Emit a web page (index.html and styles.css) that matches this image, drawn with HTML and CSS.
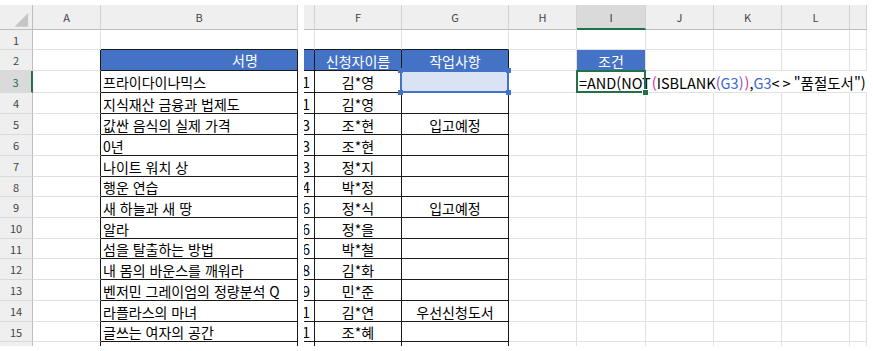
FILE: index.html
```html
<!DOCTYPE html>
<html lang="ko">
<head>
<meta charset="utf-8">
<title>Sheet</title>
<link rel="stylesheet" href="styles.css">
</head>
<body>
<div class="pane left">
  <div class="c h corner"><svg width="33" height="24" viewBox="0 0 33 24"><polygon points="29,8 29,22 15,22" fill="#c6c6c6"/></svg></div>
  <div class="c h">A</div>
  <div class="c h"><span class="bw">B</span></div>

  <div class="c rh">1</div><div class="c"></div><div class="c tt"></div>
  <div class="c rh">2</div><div class="c tl"></div><div class="c t th"><span class="bw">서명</span></div>
  <div class="c rh rsel">3</div><div class="c tl"></div><div class="c t">프라이다이나믹스</div>
  <div class="c rh">4</div><div class="c tl"></div><div class="c t">지식재산 금융과 법제도</div>
  <div class="c rh">5</div><div class="c tl"></div><div class="c t">값싼 음식의 실제 가격</div>
  <div class="c rh">6</div><div class="c tl"></div><div class="c t">0년</div>
  <div class="c rh">7</div><div class="c tl"></div><div class="c t">나이트 워치 상</div>
  <div class="c rh">8</div><div class="c tl"></div><div class="c t">행운 연습</div>
  <div class="c rh">9</div><div class="c tl"></div><div class="c t">새 하늘과 새 땅</div>
  <div class="c rh">10</div><div class="c tl"></div><div class="c t">알라</div>
  <div class="c rh">11</div><div class="c tl"></div><div class="c t">섬을 탈출하는 방법</div>
  <div class="c rh">12</div><div class="c tl"></div><div class="c t">내 몸의 바운스를 깨워라</div>
  <div class="c rh">13</div><div class="c tl"></div><div class="c t">벤저민 그레이엄의 정량분석 Q</div>
  <div class="c rh">14</div><div class="c tl"></div><div class="c t">라플라스의 마녀</div>
  <div class="c rh">15</div><div class="c tl"></div><div class="c t">글쓰는 여자의 공간</div>
  <div class="c rh">16</div><div class="c tl"></div><div class="c t">패권 도전자의 전략</div>
</div>

<div class="pane right">
  <div class="c h"></div><div class="c h">F</div><div class="c h">G</div><div class="c h">H</div><div class="c h hsel">I</div><div class="c h">J</div><div class="c h">K</div><div class="c h">L</div><div class="c h"></div>

  <div class="c tt"></div><div class="c tt"></div><div class="c tt"></div><div class="c"></div><div class="c"></div><div class="c"></div><div class="c"></div><div class="c"></div><div class="c"></div>

  <div class="c t th"></div><div class="c t th">신청자이름</div><div class="c t th">작업사항</div><div class="c"></div><div class="c cond">조건</div><div class="c"></div><div class="c"></div><div class="c"></div><div class="c"></div>

  <div class="c t num">1</div><div class="c t ctr">김*영</div><div class="c t gsel"><span class="selbox"><i class="hd h1"></i><i class="hd h2"></i><i class="hd h3"></i><i class="hd h4"></i></span></div><div class="c"></div><div class="c act"><span class="f">=AND(NOT<span class="p1">(</span>ISBLANK<span class="p2">(</span><span class="rf">G3</span><span class="p2">)</span><span class="p1">)</span>,<span class="rf">G3</span><span class="ne">&lt;&gt;</span>"품절도서")</span><i class="box"></i><i class="fh"></i></div><div class="c nb"></div><div class="c nb"></div><div class="c nb"></div><div class="c nb"></div>

  <div class="c t num">1</div><div class="c t ctr">김*영</div><div class="c t ctr"></div><div class="c"></div><div class="c"></div><div class="c"></div><div class="c"></div><div class="c"></div><div class="c"></div>
  <div class="c t num">3</div><div class="c t ctr">조*현</div><div class="c t ctr">입고예정</div><div class="c"></div><div class="c"></div><div class="c"></div><div class="c"></div><div class="c"></div><div class="c"></div>
  <div class="c t num">3</div><div class="c t ctr">조*현</div><div class="c t ctr"></div><div class="c"></div><div class="c"></div><div class="c"></div><div class="c"></div><div class="c"></div><div class="c"></div>
  <div class="c t num">3</div><div class="c t ctr">정*지</div><div class="c t ctr"></div><div class="c"></div><div class="c"></div><div class="c"></div><div class="c"></div><div class="c"></div><div class="c"></div>
  <div class="c t num">4</div><div class="c t ctr">박*정</div><div class="c t ctr"></div><div class="c"></div><div class="c"></div><div class="c"></div><div class="c"></div><div class="c"></div><div class="c"></div>
  <div class="c t num">6</div><div class="c t ctr">정*식</div><div class="c t ctr">입고예정</div><div class="c"></div><div class="c"></div><div class="c"></div><div class="c"></div><div class="c"></div><div class="c"></div>
  <div class="c t num">6</div><div class="c t ctr">정*을</div><div class="c t ctr"></div><div class="c"></div><div class="c"></div><div class="c"></div><div class="c"></div><div class="c"></div><div class="c"></div>
  <div class="c t num">6</div><div class="c t ctr">박*철</div><div class="c t ctr"></div><div class="c"></div><div class="c"></div><div class="c"></div><div class="c"></div><div class="c"></div><div class="c"></div>
  <div class="c t num">8</div><div class="c t ctr">김*화</div><div class="c t ctr"></div><div class="c"></div><div class="c"></div><div class="c"></div><div class="c"></div><div class="c"></div><div class="c"></div>
  <div class="c t num">9</div><div class="c t ctr">민*준</div><div class="c t ctr"></div><div class="c"></div><div class="c"></div><div class="c"></div><div class="c"></div><div class="c"></div><div class="c"></div>
  <div class="c t num">1</div><div class="c t ctr">김*연</div><div class="c t ctr">우선신청도서</div><div class="c"></div><div class="c"></div><div class="c"></div><div class="c"></div><div class="c"></div><div class="c"></div>
  <div class="c t num">1</div><div class="c t ctr">조*혜</div><div class="c t ctr"></div><div class="c"></div><div class="c"></div><div class="c"></div><div class="c"></div><div class="c"></div><div class="c"></div>
  <div class="c t num">1</div><div class="c t ctr">이*민</div><div class="c t ctr"></div><div class="c"></div><div class="c"></div><div class="c"></div><div class="c"></div><div class="c"></div><div class="c"></div>
</div>
</body>
</html>
```

FILE: styles.css
```css
html, body {
  margin: 0;
  background: #fff;
}
body {
  box-sizing: border-box;
  height: 351px;
  padding-top: 5px;
  display: flex;
  gap: 6px;
  overflow: hidden;
  font-family: "Noto Sans CJK KR", "Noto Sans", sans-serif;
}
.pane {
  display: grid;
  height: 341px;
  overflow: hidden;
  flex: none;
  grid-template-rows: 25px 20px 21px 22px 21px 21px 21px 21px 20px 21px 21px 20px 21px 21px 21px 20px 21px;
}
.left {
  grid-template-columns: 33px 68px 197px;
}
.right {
  grid-template-columns: 11px 87px 107px 68px 69px 68px 68px 68px 17px;
}
.c {
  box-sizing: border-box;
  min-width: 0;
  border-right: 1px solid #e1e1e1;
  border-bottom: 1px solid #e1e1e1;
  display: flex;
  align-items: center;
  white-space: nowrap;
  overflow: hidden;
  padding: 1px 2px 0;
  font-size: 14px;
  color: #000;
}
.h {
  background: #efefef;
  border-right-color: #d2d2d2;
  border-bottom-color: #bdbdbd;
  justify-content: center;
  font-size: 11px;
  color: #444;
  padding: 0;
}
.corner {
  border-right-color: #bdbdbd;
  align-items: flex-start;
}
.corner svg {
  display: block;
}
.rh {
  background: #efefef;
  border-right-color: #bdbdbd;
  border-bottom-color: #d9d9d9;
  justify-content: center;
  font-size: 11px;
  color: #444;
  padding: 0;
}
.rsel {
  background: #dadada;
  color: #217346;
  border-right: 2px solid #217346;
}
.hsel {
  background: #dadada;
  border-bottom: 2px solid #217346;
  color: #333;
}
.bw {
  flex: none;
  width: 288px;
  text-align: center;
}
.t {
  border-right-color: #1a1a1a;
  border-bottom-color: #1a1a1a;
}
.tt {
  border-bottom-color: #1a1a1a;
}
.tl {
  border-right-color: #1a1a1a;
}
.th {
  background: #4472c4;
  color: #fff;
  justify-content: center;
}
.left .th {
  justify-content: flex-start;
  padding: 0;
}
.ctr {
  justify-content: center;
}
.num {
  justify-content: flex-end;
  padding-right: 4px;
}
.cond {
  background: #4472c4;
  color: #fff;
  justify-content: center;
}
.gsel {
  background: #dae3f3;
  position: relative;
  overflow: visible;
  z-index: 2;
}
.selbox {
  position: absolute;
  left: -2px;
  top: -1px;
  right: -1px;
  bottom: -1px;
  border: 2px solid #4472c4;
}
.hd {
  position: absolute;
  width: 5px;
  height: 5px;
  background: #4472c4;
}
.h1 { left: -4px; top: -4px; }
.h2 { right: -4px; top: -4px; }
.h3 { left: -4px; bottom: -4px; }
.h4 { right: -4px; bottom: -4px; }
.act {
  position: relative;
  overflow: visible;
  z-index: 3;
  padding-left: 2px;
}
.act .box {
  position: absolute;
  left: -1px;
  top: -1px;
  right: -1px;
  bottom: -1px;
  border: 2px solid #217346;
}
.act .fh {
  position: absolute;
  right: -4px;
  bottom: -4px;
  width: 5px;
  height: 5px;
  background: #217346;
  border: 1px solid #fff;
}
.f {
  flex: none;
  font-size: 14.5px;
}
.p1 { color: #d5328a; padding-left: 1px; }
.p2 { color: #8a4fd0; }
.rf { color: #3a68d0; }
.ne { letter-spacing: 3px; }
.nb {
  border-right-color: transparent;
}
```
